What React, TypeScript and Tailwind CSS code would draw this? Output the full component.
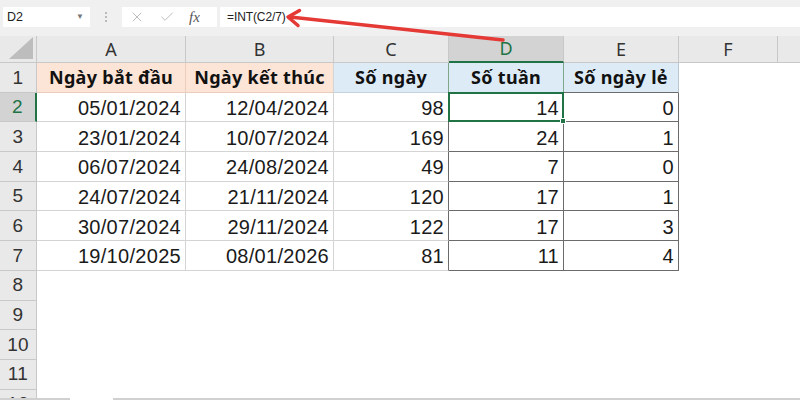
import { Check, X } from "lucide-react";

// Excel-like sheet: formula bar, headers, and the INT(C2/7) weeks table.
const rows = [
  ["05/01/2024", "12/04/2024", "98", "14", "0"],
  ["23/01/2024", "10/07/2024", "169", "24", "1"],
  ["06/07/2024", "24/08/2024", "49", "7", "0"],
  ["24/07/2024", "21/11/2024", "120", "17", "1"],
  ["30/07/2024", "29/11/2024", "122", "17", "3"],
  ["19/10/2025", "08/01/2026", "81", "11", "4"],
];

const data = "flex items-center justify-end pr-[4px] pt-[2px] shrink-0";
const rowHead =
  "w-[37px] shrink-0 flex items-center justify-center border-r border-b border-[#c8c8c8] bg-[#e9e9e9] text-[#333] text-[19px] pt-[1px]";

function FormulaBar() {
  return (
    <div className="h-[36px] shrink-0 bg-[#f0f0f0] flex items-start pt-[7px] pl-[3px] gap-[3px] text-[12.5px] text-[#222] font-['Liberation_Sans',sans-serif]">
      <div className="w-[87px] h-[20px] bg-white flex items-center justify-between pl-[4px] pr-[6px]">
        <span>D2</span>
        <span className="text-[8px] text-[#777]">▼</span>
      </div>
      <div className="w-[26px] h-[20px] flex flex-col items-center justify-center gap-[2px]">
        <span className="w-[2px] h-[2px] bg-[#a8a8a8] rounded-full" />
        <span className="w-[2px] h-[2px] bg-[#a8a8a8] rounded-full" />
        <span className="w-[2px] h-[2px] bg-[#a8a8a8] rounded-full" />
      </div>
      <div className="w-[95px] h-[20px] bg-white flex items-center pl-[7px] gap-[14px]">
        <X size={16} strokeWidth={1.3} color="#b4b4b4" />
        <Check size={16} strokeWidth={1.3} color="#b4b4b4" />
        <span className="italic text-[15px] text-[#555] font-['Liberation_Serif',serif] leading-none">
          fx
        </span>
      </div>
      <div className="flex-1 h-[20px] bg-white flex items-center pl-[7px] text-[12px] tracking-[-0.1px]">
        =INT(C2/7)
      </div>
    </div>
  );
}

function ColumnHeaders() {
  const letter = "shrink-0 flex items-center justify-center border-r border-b border-[#c8c8c8]";
  return (
    <div className="h-[27px] shrink-0 flex bg-[#e9e9e9] text-[18px] text-[#333] font-['Noto_Sans',sans-serif]">
      <div className="w-[37px] shrink-0 border-r border-b border-[#c8c8c8] flex items-end justify-end p-[3px]">
        <svg width="24" height="22" viewBox="0 0 24 22">
          <polygon points="0,22 24,22 24,0" fill="#bdbdbd" />
        </svg>
      </div>
      <div className={`${letter} w-[149px]`}>A</div>
      <div className={`${letter} w-[148px]`}>B</div>
      <div className={`${letter} w-[115px]`}>C</div>
      <div className="shrink-0 w-[115px] flex items-center justify-center border-r border-[#c8c8c8] border-b-2 border-b-[#217346] bg-[#d3d3d3] text-[#217346]">
        D
      </div>
      <div className={`${letter} w-[115px]`}>E</div>
      <div className={`${letter} w-[99px]`}>F</div>
      <div className="flex-1 border-b border-[#c8c8c8]" />
    </div>
  );
}

function TitleRow() {
  const head =
    "shrink-0 flex items-center justify-center font-bold text-[18px] text-[#111] font-['Noto_Sans',sans-serif] border-b";
  return (
    <div className="h-[29.7px] shrink-0 flex">
      <div className={rowHead}>1</div>
      <div className={`${head} w-[149px] bg-[#fce4d6] border-r border-[#e9cdbd]`}>Ngày bắt đầu</div>
      <div className={`${head} w-[148px] bg-[#fce4d6] border-r border-[#d4d4d4] border-b-[#e9cdbd]`}>
        Ngày kết thúc
      </div>
      <div className={`${head} w-[115px] bg-[#ddebf7] border-r border-r-[#7fa88a] border-b-[#c3d3e0]`}>
        Số ngày
      </div>
      <div className={`${head} w-[115px] bg-[#ddebf7] border-r border-r-[#7fa88a] border-b-[#6b6b6b]`}>
        Số tuần
      </div>
      <div className={`${head} w-[115px] bg-[#ddebf7] border-r border-r-[#b9c7d3] border-b-[#6b6b6b]`}>
        Số ngày lẻ
      </div>
    </div>
  );
}

export default function App() {
  return (
    <div className="relative w-[800px] h-[400px] overflow-hidden bg-white flex flex-col">
      <FormulaBar />
      <ColumnHeaders />
      <div className="flex-1 overflow-hidden flex flex-col text-[20px] text-[#1a1a1a] font-['Liberation_Sans',sans-serif] tracking-[0.3px]">
        <TitleRow />
        {rows.map((r, i) => (
          <div key={i} className="h-[29.7px] shrink-0 flex">
            {i === 0 ? (
              <div className="w-[37px] shrink-0 flex items-center justify-center border-b border-[#c8c8c8] border-r-2 border-r-[#217346] bg-[#d3d3d3] text-[#217346] text-[19px] pt-[1px]">
                2
              </div>
            ) : (
              <div className={rowHead}>{i + 2}</div>
            )}
            <div className={`${data} w-[149px] border-r border-b border-[#d4d4d4]`}>{r[0]}</div>
            <div className={`${data} w-[148px] border-r border-b border-[#d4d4d4]`}>{r[1]}</div>
            <div className={`${data} w-[115px] border-b border-[#d4d4d4] border-r border-r-[#6b6b6b]`}>
              {r[2]}
            </div>
            <div className={`${data} relative w-[115px] border-r border-b border-[#6b6b6b]`}>
              {r[3]}
              {i === 0 && (
                <div className="absolute z-10 -left-[1px] -top-[1px] -right-[1px] -bottom-[1px] border-2 border-[#217346]">
                  <div className="absolute -right-[4px] -bottom-[4px] w-[6px] h-[6px] bg-[#217346] border border-white" />
                </div>
              )}
            </div>
            <div className={`${data} w-[115px] border-r border-b border-[#6b6b6b]`}>{r[4]}</div>
          </div>
        ))}
        {[8, 9, 10, 11, 12].map((n) => (
          <div key={n} className="h-[29.7px] shrink-0 flex">
            <div className={rowHead}>{n}</div>
          </div>
        ))}
      </div>
      <div className="absolute left-0 right-0 bottom-0 h-[2px] bg-[#d0d0d0] flex">
        <div className="ml-[70px] w-[43px] bg-white" />
      </div>
      <svg className="absolute inset-0 z-20 pointer-events-none" width="800" height="400" viewBox="0 0 800 400">
        <line x1="503" y1="40" x2="290" y2="17" stroke="#e53935" strokeWidth="3.5" strokeLinecap="round" />
        <polyline
          points="299.5,10.5 288,17 298,25.5"
          fill="none"
          stroke="#e53935"
          strokeWidth="3.5"
          strokeLinecap="round"
          strokeLinejoin="round"
        />
      </svg>
    </div>
  );
}
